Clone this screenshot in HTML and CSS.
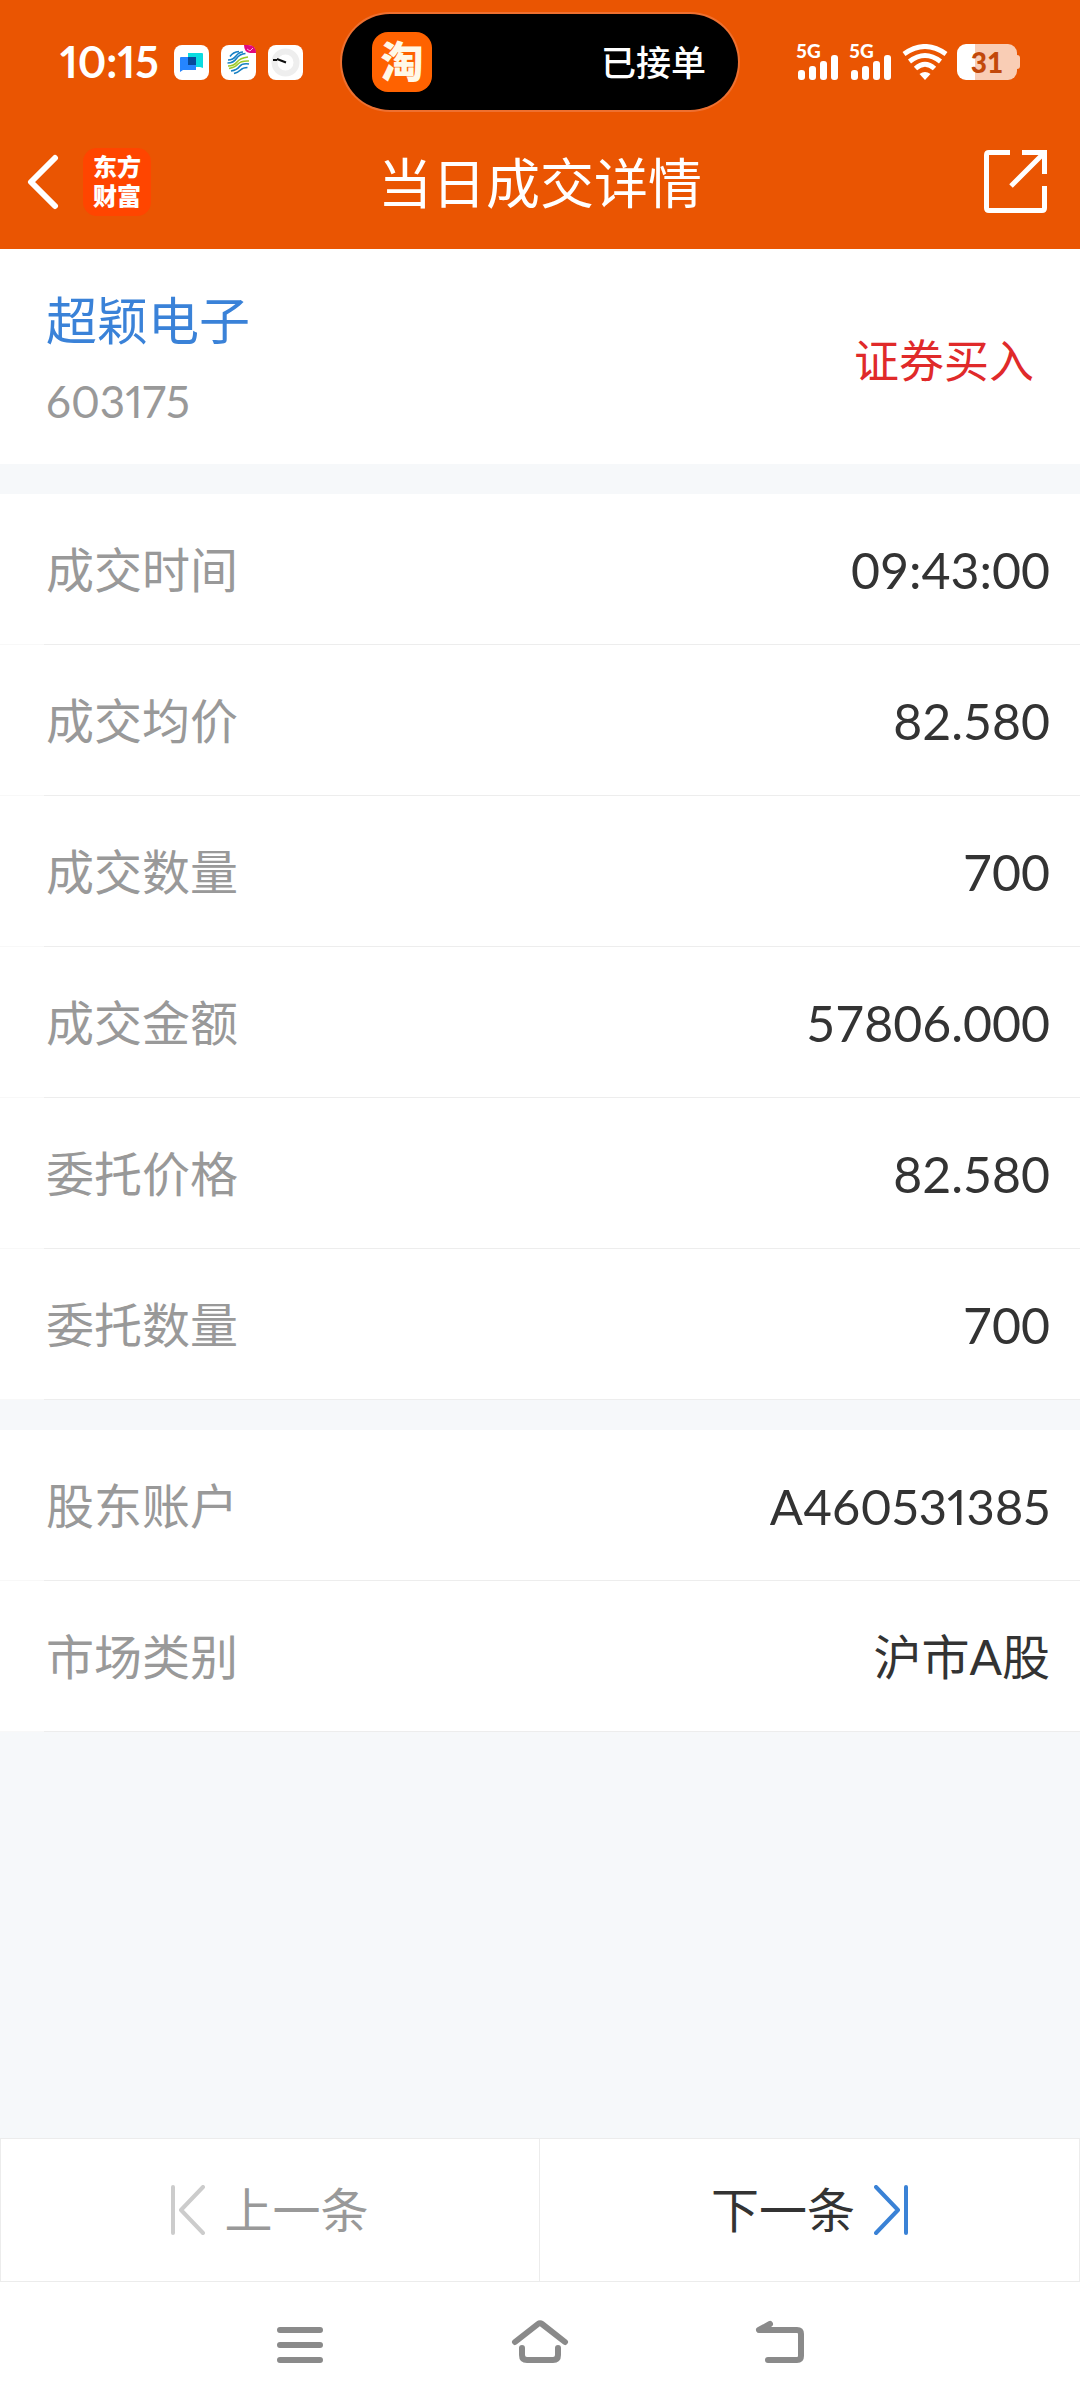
FILE: index.html
```html
<!DOCTYPE html>
<html lang="zh-CN">
<head>
<meta charset="utf-8">
<meta name="viewport" content="width=device-width, initial-scale=1">
<title>当日成交详情</title>
<link rel="stylesheet" href="styles.css">
</head>
<body>
<div class="app">
  <header class="header">
    <div class="status">
      <div class="status-left">
        <span class="clock">10:15</span>
        <div class="notices">
          <svg class="notice" viewBox="0 0 35 35" aria-hidden="true">
            <rect width="35" height="35" rx="8" fill="#fff"/>
            <path d="M14 8h14q1 0 1 1v14l-3-1H14z" fill="#0adbe0"/>
            <path d="M7 12h15v13H9l-3 2V13q0-1 1-1z" fill="#2585ff"/>
            <rect x="14" y="12" width="8" height="8" fill="#064a9c"/>
          </svg>
          <svg class="notice" viewBox="0 0 35 35" aria-hidden="true">
            <rect width="35" height="35" rx="8" fill="#fff"/>
            <g fill="none" stroke-width="1.600">
              <path d="M7 15q5 0 8-4t7-4M6.500 18q6 0 9-4.500t9-5" stroke="#1680c4"/>
              <path d="M9 11.500q3-4.500 9-5" stroke="#1680c4"/>
              <path d="M7 21q6 0 9-4t11-5M8 23.500q6-1 9-4.500t11-3" stroke="#9bc92a"/>
              <path d="M10 26q6-1 8.500-4.500t9.500-2.500M13 28.500q4-1 6.500-3.500t7-2.500" stroke="#1680c4"/>
            </g>
            <path d="M23 0h4q8 0 8 8h-6q-6-1-6-8z" fill="#e2087e"/>
            <path d="M26 4l3 2 3-3" fill="none" stroke="#f9b5d8"/>
          </svg>
          <svg class="notice" viewBox="0 0 35 35" aria-hidden="true">
            <rect width="35" height="35" rx="8" fill="#fff"/>
            <circle cx="17.500" cy="17.500" r="11" fill="none" stroke="#eee" stroke-width="6"/>
            <path d="M5 15h4M9 14l9 3.500" stroke="#111" stroke-width="2" fill="none"/>
          </svg>
        </div>
      </div>
      <div class="island">
        <span class="taobao">淘</span>
        <span class="island-text">已接单</span>
      </div>
      <div class="status-right">
        <div class="cell">
          <span class="net">5G</span>
          <svg class="bars" viewBox="0 0 41 25" fill="#fff" aria-hidden="true"><rect y="15" width="7" height="10" rx="3"/><rect x="11" y="11" width="7" height="14" rx="3"/><rect x="22" y="6" width="7" height="19" rx="3"/><rect x="33" width="7" height="25" rx="3"/></svg>
        </div>
        <div class="cell">
          <span class="net">5G</span>
          <svg class="bars" viewBox="0 0 41 25" fill="#fff" aria-hidden="true"><rect y="15" width="7" height="10" rx="3"/><rect x="11" y="11" width="7" height="14" rx="3"/><rect x="22" y="6" width="7" height="19" rx="3"/><rect x="33" width="7" height="25" rx="3"/></svg>
        </div>
        <svg class="wifi" viewBox="0 0 46 36" fill="none" stroke="#fff" stroke-width="5" aria-hidden="true">
          <path d="M2 10Q23-5 44 10M7.500 17.500Q23 5.500 38.500 17.500M13.500 24.500Q23 16 32.500 24.500"/>
          <path d="M17.500 30Q23 26 28.500 30L23 36z" fill="#fff" stroke="none"/>
        </svg>
        <div class="battery"><span class="battery-level">31</span></div>
      </div>
    </div>
    <nav class="titlebar">
      <div class="titlebar-left">
        <button class="icon-btn" type="button" aria-label="返回">
          <svg class="back" viewBox="0 0 34 56" fill="none" stroke="#fff" stroke-width="6" stroke-linecap="round" stroke-linejoin="round" aria-hidden="true"><path d="M29 4L5 28L29 52"/></svg>
        </button>
        <span class="brand">东方<br>财富</span>
      </div>
      <h1 class="title">当日成交详情</h1>
      <button class="icon-btn share-btn" type="button" aria-label="分享">
        <svg class="share" viewBox="0 0 63 63" fill="none" stroke="#fff" stroke-width="5" aria-hidden="true"><path d="M26 2.500H5q-2.500 0-2.500 2.500V58q0 2.500 2.500 2.500H58q2.500 0 2.500-2.500V36M38 2.500H60.500V24M60 3L27 36"/></svg>
      </button>
    </nav>
  </header>

  <main class="content">
    <section class="summary">
      <div>
        <a class="stock-name" href="#">超颖电子</a>
        <div class="stock-code">603175</div>
      </div>
      <span class="side">证券买入</span>
    </section>

    <dl class="group">
      <div class="row"><dt>成交时间</dt><dd>09:43:00</dd></div>
      <div class="row"><dt>成交均价</dt><dd>82.580</dd></div>
      <div class="row"><dt>成交数量</dt><dd>700</dd></div>
      <div class="row"><dt>成交金额</dt><dd>57806.000</dd></div>
      <div class="row"><dt>委托价格</dt><dd>82.580</dd></div>
      <div class="row"><dt>委托数量</dt><dd>700</dd></div>
    </dl>

    <dl class="group">
      <div class="row"><dt>股东账户</dt><dd class="account">A460531385</dd></div>
      <div class="row"><dt>市场类别</dt><dd class="text-value">沪市A股</dd></div>
    </dl>
  </main>

  <footer>
    <div class="pager">
      <button class="pager-btn" type="button" disabled>
        <svg class="pager-icon" viewBox="0 0 34 50" fill="none" stroke="#ccc" stroke-width="4" stroke-linecap="round" stroke-linejoin="round" aria-hidden="true"><path d="M2 2V48M32 2L10 25L32 48"/></svg>
        上一条
      </button>
      <button class="pager-btn" type="button">
        下一条
        <svg class="pager-icon" viewBox="0 0 34 50" fill="none" stroke="#3a82d6" stroke-width="4" stroke-linecap="round" stroke-linejoin="round" aria-hidden="true"><path d="M32 2V48M2 2L24 25L2 48"/></svg>
      </button>
    </div>
    <div class="sysnav">
      <button class="sys-btn" type="button" aria-label="最近任务"><svg class="sys-icon" viewBox="0 0 60 48" aria-hidden="true"><path d="M10 12H50M10 27H50M10 42H50"/></svg></button>
      <button class="sys-btn" type="button" aria-label="主页"><svg class="sys-icon" viewBox="0 0 60 48" aria-hidden="true"><path d="M5 24L28 6Q30 4.500 32 6L55 24M12 30V37Q12 42 17 42H43Q48 42 48 37V30"/></svg></button>
      <button class="sys-btn" type="button" aria-label="后退"><svg class="sys-icon" viewBox="0 0 60 48" aria-hidden="true"><path d="M20 6L9 12H47Q51 12 51 16V38Q51 42 47 42H18"/></svg></button>
    </div>
  </footer>
</div>
</body>
</html>
```

FILE: styles.css
```css
* {
  box-sizing: border-box;
}

body {
  margin: 0;
  background: #f6f8fa;
  color: #333;
  font-family: Lato, "Noto Sans CJK SC", sans-serif;
}

button {
  margin: 0;
  padding: 0;
  border: 0;
  background: none;
  color: inherit;
  font: inherit;
}

svg {
  display: block;
  flex: none;
}

.app {
  display: flex;
  flex-direction: column;
  min-height: 100vh;
}

/* Header */

.header {
  padding-bottom: 10px;
  background: #ea5502;
  color: #fff;
}

.status {
  display: grid;
  grid-template-columns: 1fr 396px 1fr;
  align-items: center;
  height: 124px;
}

.status-left {
  display: flex;
  align-items: center;
  justify-content: space-between;
  padding: 0 39px 0 60px;
}

.clock {
  font-size: 43px;
  font-weight: 700;
  font-variant-numeric: proportional-nums;
  line-height: 48px;
}

.notices {
  display: flex;
  gap: 12px;
}

.notice {
  width: 35px;
  height: 35px;
}

.island {
  display: flex;
  align-items: center;
  justify-content: space-between;
  height: 96px;
  padding: 0 32px 0 30px;
  border-radius: 48px;
  background: #000;
  box-shadow: 0 0 0 2px #ee7030;
}

.taobao {
  width: 60px;
  border-radius: 16px;
  background: #ff6200;
  color: #fff8e8;
  font-size: 43px;
  font-weight: 900;
  line-height: 60px;
  text-align: center;
}

.island-text {
  font-size: 35px;
  font-weight: 500;
  line-height: 48px;
}

.status-right {
  display: flex;
  align-items: flex-end;
  justify-content: flex-end;
  gap: 9px;
  padding-right: 63px;
}

.cell {
  display: flex;
  position: relative;
  width: 44px;
  height: 36px;
}

.net {
  position: absolute;
  top: -2px;
  left: 0;
  font-size: 19px;
  font-weight: 900;
  line-height: 18px;
}

.bars {
  width: 41px;
  height: 25px;
  margin: auto 0 0 2px;
}

.wifi {
  width: 46px;
  height: 36px;
}

.battery {
  position: relative;
  width: 60px;
  height: 36px;
  border-radius: 9px;
  background: linear-gradient(90deg, #fff 18px, #f9cdb5 18px);
  color: #c2480a;
  text-align: center;
}

.battery::after {
  content: "";
  position: absolute;
  top: 11px;
  right: -3px;
  width: 3px;
  height: 14px;
  border-radius: 0 3px 3px 0;
  background: #f9cdb5;
}

.battery-level {
  font-size: 28px;
  font-weight: 900;
  line-height: 36px;
}

.titlebar {
  display: grid;
  grid-template-columns: 1fr auto 1fr;
  align-items: center;
  height: 115px;
  padding: 0 26px;
}

.titlebar-left {
  display: flex;
  align-items: center;
  gap: 23px;
}

.back {
  width: 34px;
  height: 56px;
}

.brand {
  width: 68px;
  padding: 4px 0 6px;
  border-radius: 14px;
  background: #ff4500;
  font-size: 24px;
  font-weight: 900;
  line-height: 29px;
  text-align: center;
}

.title {
  margin: 0;
  padding-top: 4px;
  font-size: 54px;
  font-weight: 400;
  line-height: 72px;
}

.share-btn {
  justify-self: end;
  margin-right: 7px;
}

.share {
  width: 63px;
  height: 63px;
}

/* Trade details */

.content {
  display: flex;
  flex: 1;
  flex-direction: column;
  gap: 30px;
}

.summary {
  display: flex;
  align-items: center;
  justify-content: space-between;
  padding: 38px 46px 29px;
  background: #fff;
}

.stock-name {
  display: block;
  color: #3a82d8;
  font-size: 51px;
  line-height: 68px;
  text-decoration: none;
}

.stock-code {
  margin-top: 12px;
  color: #999;
  font-size: 44px;
  font-variant-numeric: proportional-nums;
  line-height: 68px;
}

.side {
  color: #e02a2a;
  font-size: 45px;
  line-height: 68px;
}

.group {
  margin: 0;
}

.row {
  display: flex;
  align-items: center;
  justify-content: space-between;
  min-height: 151px;
  padding: 2px 30px 0 46px;
  border-bottom: 1px solid #ededed;
  border-image: linear-gradient(90deg, #f8f8f8 45px, #ededed 45px) 1;
  background: #fff;
}

.row dt {
  color: #999;
  font-size: 48px;
  line-height: 72px;
}

.row dd {
  margin: 0;
  font-size: 50px;
  line-height: 72px;
}

.row .account {
  font-size: 49px;
  font-variant-numeric: proportional-nums;
}

.row .text-value {
  font-size: 48px;
}

/* Footer */

.pager {
  display: grid;
  grid-template-columns: 1fr 1fr;
  background: #fff;
}

.pager-btn {
  display: flex;
  align-items: center;
  justify-content: center;
  gap: 19px;
  height: 144px;
  border: 1px solid #ececec;
  color: #333;
  font-size: 48px;
  line-height: 72px;
}

.pager-btn + .pager-btn {
  border-left: 0;
}

.pager-btn:disabled {
  color: #999;
}

.pager-icon {
  width: 34px;
  height: 50px;
}

.sysnav {
  display: flex;
  justify-content: center;
  height: 126px;
  padding-bottom: 6px;
  background: #fff;
}

.sys-btn {
  display: flex;
  align-items: center;
  justify-content: center;
  width: 240px;
}

.sys-icon {
  width: 60px;
  height: 48px;
  fill: none;
  stroke: #8a8a8a;
  stroke-width: 6;
  stroke-linecap: round;
  stroke-linejoin: round;
}
```
